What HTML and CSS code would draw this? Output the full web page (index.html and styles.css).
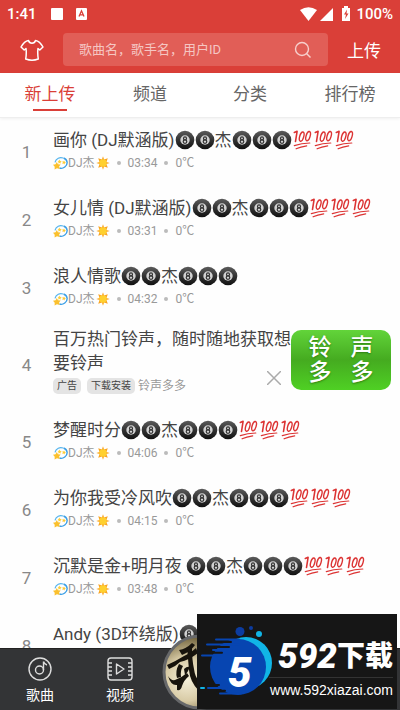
FILE: index.html
```html
<!DOCTYPE html>
<html lang="zh-CN">
<head>
    <meta charset="UTF-8">
    <meta name="viewport" content="width=device-width, initial-scale=1.0">
    <title>新上传</title>
    <link rel="stylesheet" href="styles.css">
</head>
<body>
    <!-- shared emoji -->
    <svg class="sprite" width="0" height="0" aria-hidden="true">
        <defs>
            <linearGradient id="ball-fill" x1="0" y1="0" x2="0" y2="1">
                <stop offset="0" stop-color="#5c5c5c"/>
                <stop offset="0.5" stop-color="#333"/>
                <stop offset="1" stop-color="#111"/>
            </linearGradient>
        </defs>
        <symbol id="ball" viewBox="0 0 20 20">
            <circle cx="10" cy="10" r="9.3" fill="url(#ball-fill)"/>
            <circle cx="10" cy="10" r="4.7" fill="#d2d2d2"/>
            <circle cx="10" cy="8.4" r="1.5" fill="none" stroke="#333" stroke-width="1.2"/>
            <circle cx="10" cy="11.6" r="1.8" fill="none" stroke="#333" stroke-width="1.2"/>
        </symbol>
        <symbol id="hundred" viewBox="0 0 20 20">
            <g fill="none" stroke="#dc3434" stroke-linecap="round" stroke-linejoin="round">
                <path d="M1.8 2.5 L4.6 1.3 L3 11.5" stroke-width="1.6"/>
                <ellipse cx="9.2" cy="6.6" rx="2" ry="4.8" transform="rotate(16 9.2 6.6)" stroke-width="1.4"/>
                <ellipse cx="15.6" cy="6.1" rx="2" ry="4.8" transform="rotate(16 15.6 6.1)" stroke-width="1.4"/>
                <path d="M1.8 15.6 Q9 13.4 17.3 13" stroke-width="1.2"/>
                <path d="M3.6 18.8 Q8 16.6 14.2 15.8" stroke-width="1.2"/>
            </g>
        </symbol>
        <symbol id="dizzy" viewBox="0 0 15 15">
            <path d="M2 6.3 C3 2.3 7 .8 10 2" fill="none" stroke="#55b4ed" stroke-width="1.2"/>
            <path d="M10.5 2 C15 3.6 15.2 8.5 11.8 11 C9.9 12.4 8 12.6 6.5 12" fill="none" stroke="#3b9fe6" stroke-width="1.4"/>
            <path d="M3.8 6 L5 8.2 L7.6 8.6 L6.1 10.5 L6.7 13 L4 12.2 L1.6 13.5 L1.7 10.8 L0 8.8 L2.6 8.2Z" fill="#fbc02d"/>
            <path d="M6.7 3.6 L7.3 5 L8.8 5.3 L7.6 6.2 L7.8 7.6 L6.5 6.9 L5.2 7.4 L5.5 6 L4.6 5 L6 4.8Z" fill="#fdd13c"/>
            <path d="M11 4.5 L11.7 5.8 L13 6.2 L11.8 7 L11.6 8.4 L10.5 7.5 L9.2 7.7 L9.8 6.5 L9.3 5.3 L10.6 5.6Z" fill="#fdca35"/>
        </symbol>
        <symbol id="sun" viewBox="0 0 14 14">
            <path d="M7 .2 L8.1 3.6 L11.8 2.2 L10.4 5.9 L13.8 7 L10.4 8.1 L11.8 11.8 L8.1 10.4 L7 13.8 L5.9 10.4 L2.2 11.8 L3.6 8.1 L.2 7 L3.6 5.9 L2.2 2.2 L5.9 3.6Z" fill="#f9a321"/>
            <circle cx="7" cy="7" r="3.7" fill="#ffd02e"/>
        </symbol>
    </svg>

    <header class="top">
        <div class="status">
            <span class="clock">1:41</span>
            <svg class="status-left" width="36" height="12" viewBox="0 0 36 12" fill="#fff">
                <rect width="12" height="12" rx="1"/>
                <rect x="25" width="11" height="12" rx="1"/>
                <path d="M28 8.5 L30.5 2.8 L33 8.5 M29 6.8 H32" fill="none" stroke="#da3f38" stroke-width="1.3"/>
            </svg>
            <svg class="status-right" width="51" height="16" viewBox="0 0 51 16" fill="#fff">
                <path d="M0 4 Q8.5 -1.5 17 4 L8.5 15Z"/>
                <path d="M33 2 V15 H20Z"/>
                <path d="M42 2 H44 V0 H48 V2 H50 V15 H42Z"/>
                <path d="M47 3.5 L44 8.5 H46 L45 13 L48.5 7.5 H46.5Z" fill="#da3f38"/>
            </svg>
            <span class="battery">100%</span>
        </div>
        <div class="toolbar">
            <button class="skin" type="button" aria-label="皮肤">
                <svg width="24" height="22" viewBox="0 0 24 22" fill="none" stroke="#fff" stroke-width="1.5" stroke-linejoin="round">
                    <path d="M8.500 1.500 C9.500 5 14.500 5 15.500 1.500 C18.500 2 21 4.500 23 8 L19.800 11 L18 9.500 C17.500 13 17.800 17 18.300 20 C15 21.200 9 21.200 5.700 20 C6.200 17 6.500 13 6 9.500 L4.200 11 L1 8 C3 4.500 5.500 2 8.500 1.500Z"/>
                </svg>
            </button>
            <form class="search">
                <input type="text" placeholder="歌曲名，歌手名，用户ID" aria-label="搜索">
                <button type="button" aria-label="搜索">
                    <svg width="18" height="18" viewBox="0 0 18 18" fill="none" stroke="#f7cfcc" stroke-width="1.4">
                        <circle cx="8" cy="8" r="6.5"/>
                        <path d="M12.5 12.5 L16.5 16.5"/>
                    </svg>
                </button>
            </form>
            <button class="upload" type="button">上传</button>
        </div>
    </header>

    <nav class="tabs">
        <a class="active" href="#new">新上传</a>
        <a href="#channel">频道</a>
        <a href="#category">分类</a>
        <a href="#rank">排行榜</a>
    </nav>

    <main class="list">
        <div class="row">
            <span class="num">1</span>
            <div class="info">
                <div class="title">画你 (DJ默涵版)<svg class="emo"><use href="#ball"/></svg><svg class="emo"><use href="#ball"/></svg>杰<svg class="emo"><use href="#ball"/></svg><svg class="emo"><use href="#ball"/></svg><svg class="emo"><use href="#ball"/></svg><svg class="emo wide"><use href="#hundred"/></svg><svg class="emo wide"><use href="#hundred"/></svg><svg class="emo wide"><use href="#hundred"/></svg></div>
                <div class="meta"><svg class="dizzy"><use href="#dizzy"/></svg>DJ杰<svg class="sun"><use href="#sun"/></svg><i class="dot"></i>03:34<i class="dot"></i>0℃</div>
            </div>
        </div>
        <div class="row">
            <span class="num">2</span>
            <div class="info">
                <div class="title">女儿情 (DJ默涵版)<svg class="emo"><use href="#ball"/></svg><svg class="emo"><use href="#ball"/></svg>杰<svg class="emo"><use href="#ball"/></svg><svg class="emo"><use href="#ball"/></svg><svg class="emo"><use href="#ball"/></svg><svg class="emo wide"><use href="#hundred"/></svg><svg class="emo wide"><use href="#hundred"/></svg><svg class="emo wide"><use href="#hundred"/></svg></div>
                <div class="meta"><svg class="dizzy"><use href="#dizzy"/></svg>DJ杰<svg class="sun"><use href="#sun"/></svg><i class="dot"></i>03:31<i class="dot"></i>0℃</div>
            </div>
        </div>
        <div class="row">
            <span class="num">3</span>
            <div class="info">
                <div class="title">浪人情歌<svg class="emo"><use href="#ball"/></svg><svg class="emo"><use href="#ball"/></svg>杰<svg class="emo"><use href="#ball"/></svg><svg class="emo"><use href="#ball"/></svg><svg class="emo"><use href="#ball"/></svg></div>
                <div class="meta"><svg class="dizzy"><use href="#dizzy"/></svg>DJ杰<svg class="sun"><use href="#sun"/></svg><i class="dot"></i>04:32<i class="dot"></i>0℃</div>
            </div>
        </div>
        <!-- ad -->
        <div class="row ad">
            <span class="num">4</span>
            <div class="info">
                <div class="title">百万热门铃声，随时随地获取想要铃声</div>
                <div class="meta">
                    <span class="tag">广告</span>
                    <span class="tag">下载安装</span>
                    <span>铃声多多</span>
                    <button class="close" type="button" aria-label="关闭">
                        <svg width="14" height="14" viewBox="0 0 14 14" stroke="#aaa" stroke-width="1.5"><path d="M0 0 L14 14 M14 0 L0 14"/></svg>
                    </button>
                </div>
            </div>
            <div class="banner"><span>铃</span><span>声</span><span>多</span><span>多</span></div>
        </div>
        <div class="row">
            <span class="num">5</span>
            <div class="info">
                <div class="title">梦醒时分<svg class="emo"><use href="#ball"/></svg><svg class="emo"><use href="#ball"/></svg>杰<svg class="emo"><use href="#ball"/></svg><svg class="emo"><use href="#ball"/></svg><svg class="emo"><use href="#ball"/></svg><svg class="emo wide"><use href="#hundred"/></svg><svg class="emo wide"><use href="#hundred"/></svg><svg class="emo wide"><use href="#hundred"/></svg></div>
                <div class="meta"><svg class="dizzy"><use href="#dizzy"/></svg>DJ杰<svg class="sun"><use href="#sun"/></svg><i class="dot"></i>04:06<i class="dot"></i>0℃</div>
            </div>
        </div>
        <div class="row">
            <span class="num">6</span>
            <div class="info">
                <div class="title">为你我受冷风吹<svg class="emo"><use href="#ball"/></svg><svg class="emo"><use href="#ball"/></svg>杰<svg class="emo"><use href="#ball"/></svg><svg class="emo"><use href="#ball"/></svg><svg class="emo"><use href="#ball"/></svg><svg class="emo wide"><use href="#hundred"/></svg><svg class="emo wide"><use href="#hundred"/></svg><svg class="emo wide"><use href="#hundred"/></svg></div>
                <div class="meta"><svg class="dizzy"><use href="#dizzy"/></svg>DJ杰<svg class="sun"><use href="#sun"/></svg><i class="dot"></i>04:15<i class="dot"></i>0℃</div>
            </div>
        </div>
        <div class="row">
            <span class="num">7</span>
            <div class="info">
                <div class="title">沉默是金+明月夜 <svg class="emo"><use href="#ball"/></svg><svg class="emo"><use href="#ball"/></svg>杰<svg class="emo"><use href="#ball"/></svg><svg class="emo"><use href="#ball"/></svg><svg class="emo"><use href="#ball"/></svg><svg class="emo wide"><use href="#hundred"/></svg><svg class="emo wide"><use href="#hundred"/></svg><svg class="emo wide"><use href="#hundred"/></svg></div>
                <div class="meta"><svg class="dizzy"><use href="#dizzy"/></svg>DJ杰<svg class="sun"><use href="#sun"/></svg><i class="dot"></i>03:48<i class="dot"></i>0℃</div>
            </div>
        </div>
        <div class="row">
            <span class="num">8</span>
            <div class="info">
                <div class="title">Andy (3D环绕版)<svg class="emo"><use href="#ball"/></svg></div>
            </div>
        </div>
    </main>

    <nav class="bottom">
        <a href="#songs">
            <svg width="24" height="24" viewBox="0 0 24 24" fill="none" stroke="#ddd" stroke-width="1.4">
                <circle cx="12" cy="12" r="11"/>
                <circle cx="11.5" cy="13" r="4"/>
                <path d="M15.5 13 V4.5 M15.5 4.5 Q16.5 7.5 19 8"/>
            </svg>
            歌曲
        </a>
        <a href="#video">
            <svg width="26" height="24" viewBox="0 0 26 24" fill="none" stroke="#ddd" stroke-width="1.4">
                <rect x="1" y="1" width="24" height="22" rx="3"/>
                <path d="M9.5 7 L17 12 L9.5 17Z" stroke-linejoin="round"/>
                <path d="M1 6 H5 M1 10 H5 M1 14 H5 M1 18 H5 M21 6 H25 M21 10 H25 M21 14 H25 M21 18 H25"/>
            </svg>
            视频
        </a>
        <div class="player">
            <svg class="disc" width="76" height="76" viewBox="0 0 76 76">
                <defs>
                    <radialGradient id="gold" cx="0.32" cy="0.6" r="0.6">
                        <stop offset="0" stop-color="#f6f0da"/>
                        <stop offset="0.5" stop-color="#d8cba6"/>
                        <stop offset="1" stop-color="#6f613a"/>
                    </radialGradient>
                </defs>
                <circle cx="38" cy="38" r="36" fill="url(#gold)" stroke="#67686a" stroke-width="3"/>
                <g fill="#17130c">
                    <path d="M17 16 Q24 15 30 9 L33 11 Q28 18 20 21Z"/>
                    <path d="M5 31 Q14 27 22 22 Q29 19 34 14 L36 19 Q27 26 18 28 Q13 33 7 35Z"/>
                    <path d="M25 13 L30 14 Q30 26 32 35 Q33 43 37 47 L37 57 Q28 48 27 36Z"/>
                    <path d="M17 30 L21 32 Q18 37 19 43 L15 44 Q13 37 17 30Z"/>
                    <path d="M22 35 Q25 32 28 33 Q26 38 23 41Z"/>
                    <path d="M6 42 Q9 47 13 46 Q19 44 25 39 L27 42 Q22 46 20 52 Q19 57 15 56 L15 51 Q9 52 6 42Z"/>
                </g>
            </svg>
        </div>
        <div></div>
        <div></div>
    </nav>

    <aside class="mark">
        <svg class="mark-logo" width="72" height="95" viewBox="0 0 72 95" overflow="visible">
            <circle cx="49" cy="49" r="26" fill="#11b5e6"/>
            <circle cx="41" cy="53" r="28" fill="#0745b1"/>
            <g stroke-linecap="round" stroke-width="2">
                <path d="M19 25.5 H42 M10 30.5 H42 M16 36 H35 M5 41.5 H23 M11 74 H30 M23 79.5 H44" stroke="#0745b1"/>
                <path d="M25 28 H34 M18 33 H32 M16 38.8 H25 M17 71 H22 M20 76.8 H28" stroke="#161616"/>
                <path d="M4 74 H7" stroke="#11b5e6"/>
            </g>
            <circle cx="43" cy="17.5" r="4.5" fill="#0c3ca0"/>
            <circle cx="54" cy="14" r="2" fill="#0c3ca0"/>
            <circle cx="62" cy="20" r="3" fill="#11b5e6"/>
            <text class="five" x="31" y="73">5</text>
        </svg>
        <div class="mark-text">
            <div class="mark-name"><b>592</b>下载</div>
            <div class="mark-url">www.592xiazai.com</div>
        </div>
    </aside>
</body>
</html>
```
FILE: styles.css
```css
* {
    box-sizing: border-box;
}

body {
    margin: 0;
    background: #fefefe;
    font-family: Roboto, "Noto Sans CJK SC", sans-serif;
    color: #444;
}

a {
    color: inherit;
    text-decoration: none;
}

button {
    padding: 0;
    border: none;
    background: none;
    font-family: inherit;
    color: inherit;
    cursor: pointer;
}

svg {
    display: block;
}

.sprite {
    position: absolute;
}

/* header */
.top {
    background: #da3f38;
    color: #fff;
    padding-bottom: 7px;
}

.status {
    display: flex;
    align-items: center;
    height: 28px;
    padding: 0 7px;
    font-size: 15px;
    font-weight: 500;
}

.status-left {
    margin-left: 14px;
}

.status-right {
    margin-left: auto;
}

.battery {
    margin-left: 5px;
}

.toolbar {
    display: flex;
    align-items: center;
    padding-top: 5px;
}

.skin {
    width: 63px;
    display: flex;
    justify-content: center;
}

.search {
    flex: 1;
    display: flex;
    align-items: center;
    height: 33px;
    padding: 0 16px;
    border-radius: 4px;
    background: #e15e57;
}

.search input {
    flex: 1;
    min-width: 0;
    padding: 0;
    border: none;
    outline: none;
    background: none;
    font-family: inherit;
    font-size: 13px;
    color: #fff;
}

.search input::placeholder {
    color: #f5c6c3;
}

.upload {
    width: 72px;
    font-size: 17px;
}

/* tabs */
.tabs {
    display: grid;
    grid-template-columns: repeat(4, 1fr);
    height: 45px;
    background: #fff;
    border-bottom: 1px solid #eee;
    box-shadow: 0 1px 3px rgba(0, 0, 0, 0.06);
    font-size: 17px;
    line-height: 42px;
    text-align: center;
    color: #666;
}

.tabs .active {
    display: flex;
    flex-direction: column;
    align-items: center;
    color: #da3f38;
}

.tabs .active::after {
    content: "";
    width: 34px;
    height: 2px;
    margin-top: -6px;
    background: #da3f38;
}

/* list */
.row {
    display: flex;
    align-items: center;
    height: 68px;
}

.num {
    width: 53px;
    text-align: center;
    font-size: 17px;
    color: #888;
}

.info {
    flex: 1;
    align-self: flex-start;
    padding-top: 10px;
}

.title {
    font-size: 17px;
    line-height: 24px;
}

.row:not(.ad) .title {
    display: flex;
    align-items: center;
    height: 24px;
    white-space: pre;
}

.emo {
    width: 20px;
    height: 20px;
    flex: none;
}

.emo.wide {
    width: 21px;
}

.meta {
    display: flex;
    align-items: center;
    height: 22px;
    font-size: 12px;
    line-height: 22px;
    color: #999;
}

.dizzy {
    width: 15px;
    height: 15px;
}

.sun {
    width: 14px;
    height: 14px;
    margin-left: 1px;
}

.dot {
    width: 4px;
    height: 4px;
    margin: 0 7px;
    border-radius: 50%;
    background: #bbb;
}

.ad {
    height: 86px;
    padding-right: 9px;
}

.ad .info {
    padding-top: 5px;
}

.tag {
    margin-right: 6px;
    padding: 0 4px;
    border-radius: 5px;
    background: #e4e4e4;
    font-size: 10px;
    line-height: 16px;
    color: #444;
}

.tag + .tag {
    margin-right: 3px;
}

.close {
    align-self: flex-start;
    margin: -4px 10px 0 auto;
}

.banner {
    display: grid;
    grid-template-columns: 42px 42px;
    align-content: center;
    justify-content: center;
    align-self: flex-start;
    width: 100px;
    height: 60px;
    margin-top: 8px;
    border-radius: 10px;
    background: linear-gradient(#62d43a, #45ab20 50%, #4fd024);
    color: #fff;
    font-size: 23px;
    font-weight: 500;
    line-height: 25px;
    text-align: center;
    text-shadow: 0 1px 2px #2c7a12;
}

/* bottom bar */
.bottom {
    position: fixed;
    left: 0;
    right: 0;
    bottom: 0;
    display: grid;
    grid-template-columns: repeat(5, 1fr);
    height: 62px;
    border-top: 1px solid #222;
    background: #333436;
    color: #fff;
    font-size: 14px;
    line-height: 20px;
}

.bottom a {
    display: flex;
    flex-direction: column;
    align-items: center;
    gap: 4px;
    padding-top: 8px;
}

.player {
    display: flex;
    justify-content: center;
}

.disc {
    flex: none;
    margin-top: -15px;
}

/* site badge */
.mark {
    position: fixed;
    right: 3px;
    bottom: 1px;
    display: flex;
    width: 200px;
    height: 95px;
    background: #161616;
    color: #fff;
}

.mark-logo {
    flex: none;
}

.five {
    fill: #fff;
    font-size: 42px;
    font-weight: 900;
    font-style: italic;
}

.mark-text {
    flex: 1;
    padding: 22px 4px 0 0;
    text-align: right;
}

.mark-name {
    display: flex;
    align-items: center;
    justify-content: flex-end;
    height: 42px;
    border-bottom: 1px solid #333;
    font-size: 28px;
    font-weight: 900;
    line-height: 38px;
}

.mark-name b {
    font-size: 35px;
    font-style: italic;
}

.mark-url {
    font-family: "Liberation Sans", Arial, sans-serif;
    font-size: 14px;
    line-height: 24px;
}
```
